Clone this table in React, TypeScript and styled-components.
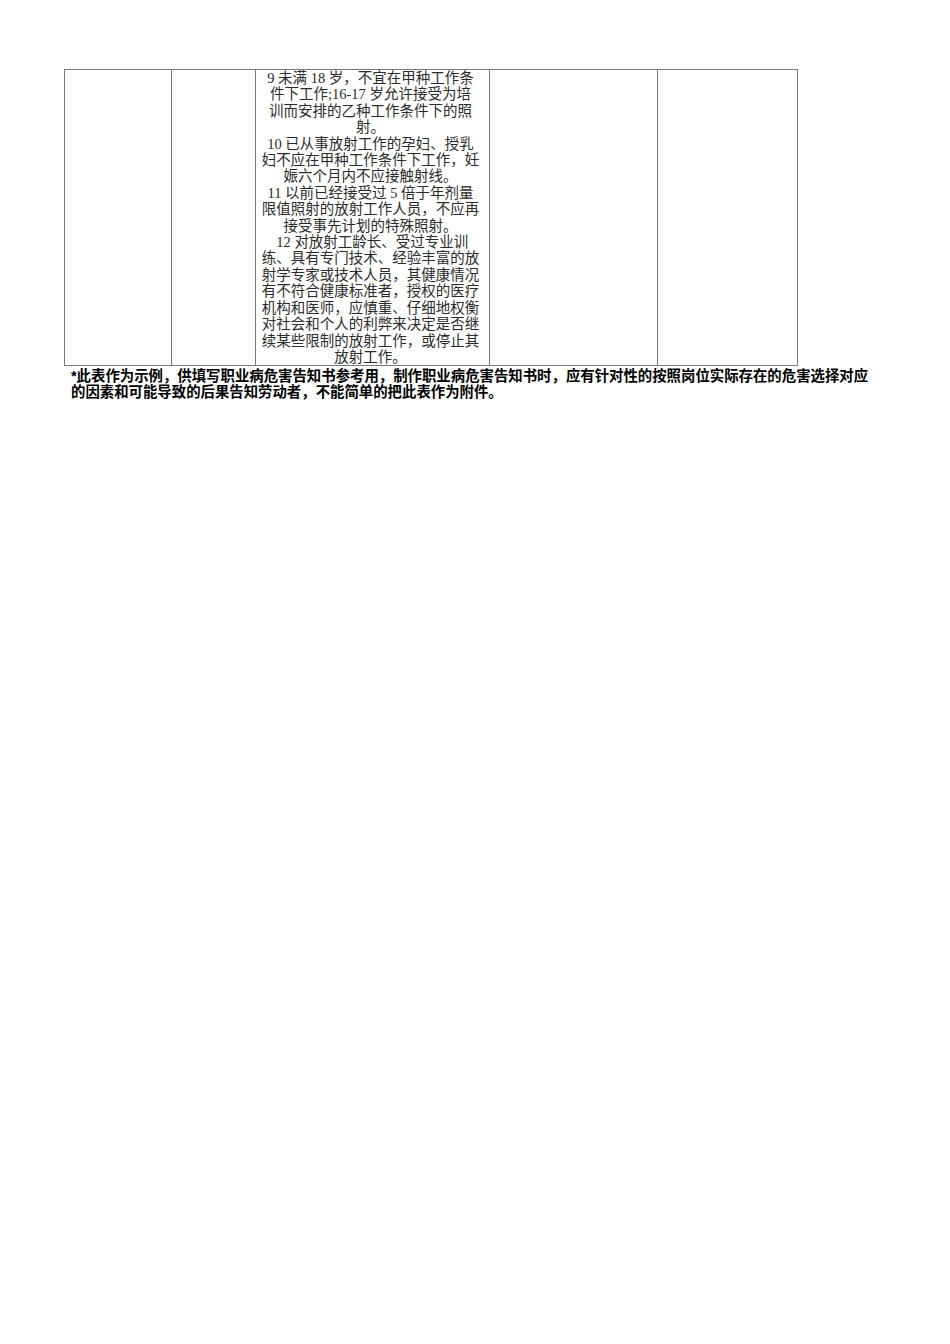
import React from "react";
import styled, { createGlobalStyle } from "styled-components";

const Global = createGlobalStyle`
  html, body { margin: 0; padding: 0; background: #fff; }
  body { font-family: "Liberation Serif", "Noto Sans CJK SC", serif; }
`;

const Page = styled.div`
  width: 950px;
  min-height: 1344px;
  padding: 69px 0 0 64px;
  box-sizing: border-box;
`;

const Table = styled.div`
  display: grid;
  grid-template-columns: 107px 84px 234px 168px 139px;
  width: 734px;
  box-sizing: border-box;
  border: 1px solid #7a7a7a;
`;

const Cell = styled.div<{ $last?: boolean; $text?: boolean }>`
  box-sizing: border-box;
  border-right: ${(p) => (p.$last ? "none" : "1px solid #7a7a7a")};
  padding-right: ${(p) => (p.$text ? "4px" : "0")};
  min-width: 0;
`;

const Line = styled.div`
  font-family: "Liberation Serif", "Noto Sans CJK SC", serif;
  font-size: 14.5px;
  line-height: 16.4px;
  color: #2b2b2b;
  text-align: center;
  white-space: nowrap;
`;

const Note = styled.div`
  padding: 2px 0 0 7px;
  font-family: "Liberation Sans", "Noto Sans CJK SC", sans-serif;
  font-weight: 700;
  font-size: 14.4px;
  line-height: 16px;
  color: #000;
  white-space: nowrap;
`;

const lines = [
  "9 未满 18 岁，不宜在甲种工作条",
  "件下工作;16-17 岁允许接受为培",
  "训而安排的乙种工作条件下的照",
  "射。",
  "10 已从事放射工作的孕妇、授乳",
  "妇不应在甲种工作条件下工作，妊",
  "娠六个月内不应接触射线。",
  "11 以前已经接受过 5 倍于年剂量",
  "限值照射的放射工作人员，不应再",
  "接受事先计划的特殊照射。",
  "\u00a012 对放射工龄长、受过专业训",
  "练、具有专门技术、经验丰富的放",
  "射学专家或技术人员，其健康情况",
  "有不符合健康标准者，授权的医疗",
  "机构和医师，应慎重、仔细地权衡",
  "对社会和个人的利弊来决定是否继",
  "续某些限制的放射工作，或停止其",
  "放射工作。",
];

export default function App() {
  return (
    <Page>
      <Global />
      <Table>
        <Cell />
        <Cell />
        <Cell $text>
          {lines.map((l, i) => (
            <Line key={i}>{l}</Line>
          ))}
        </Cell>
        <Cell />
        <Cell $last />
      </Table>
      <Note>
        *此表作为示例，供填写职业病危害告知书参考用，制作职业病危害告知书时，应有针对性的按照岗位实际存在的危害选择对应
        <br />
        的因素和可能导致的后果告知劳动者，不能简单的把此表作为附件。
      </Note>
    </Page>
  );
}
